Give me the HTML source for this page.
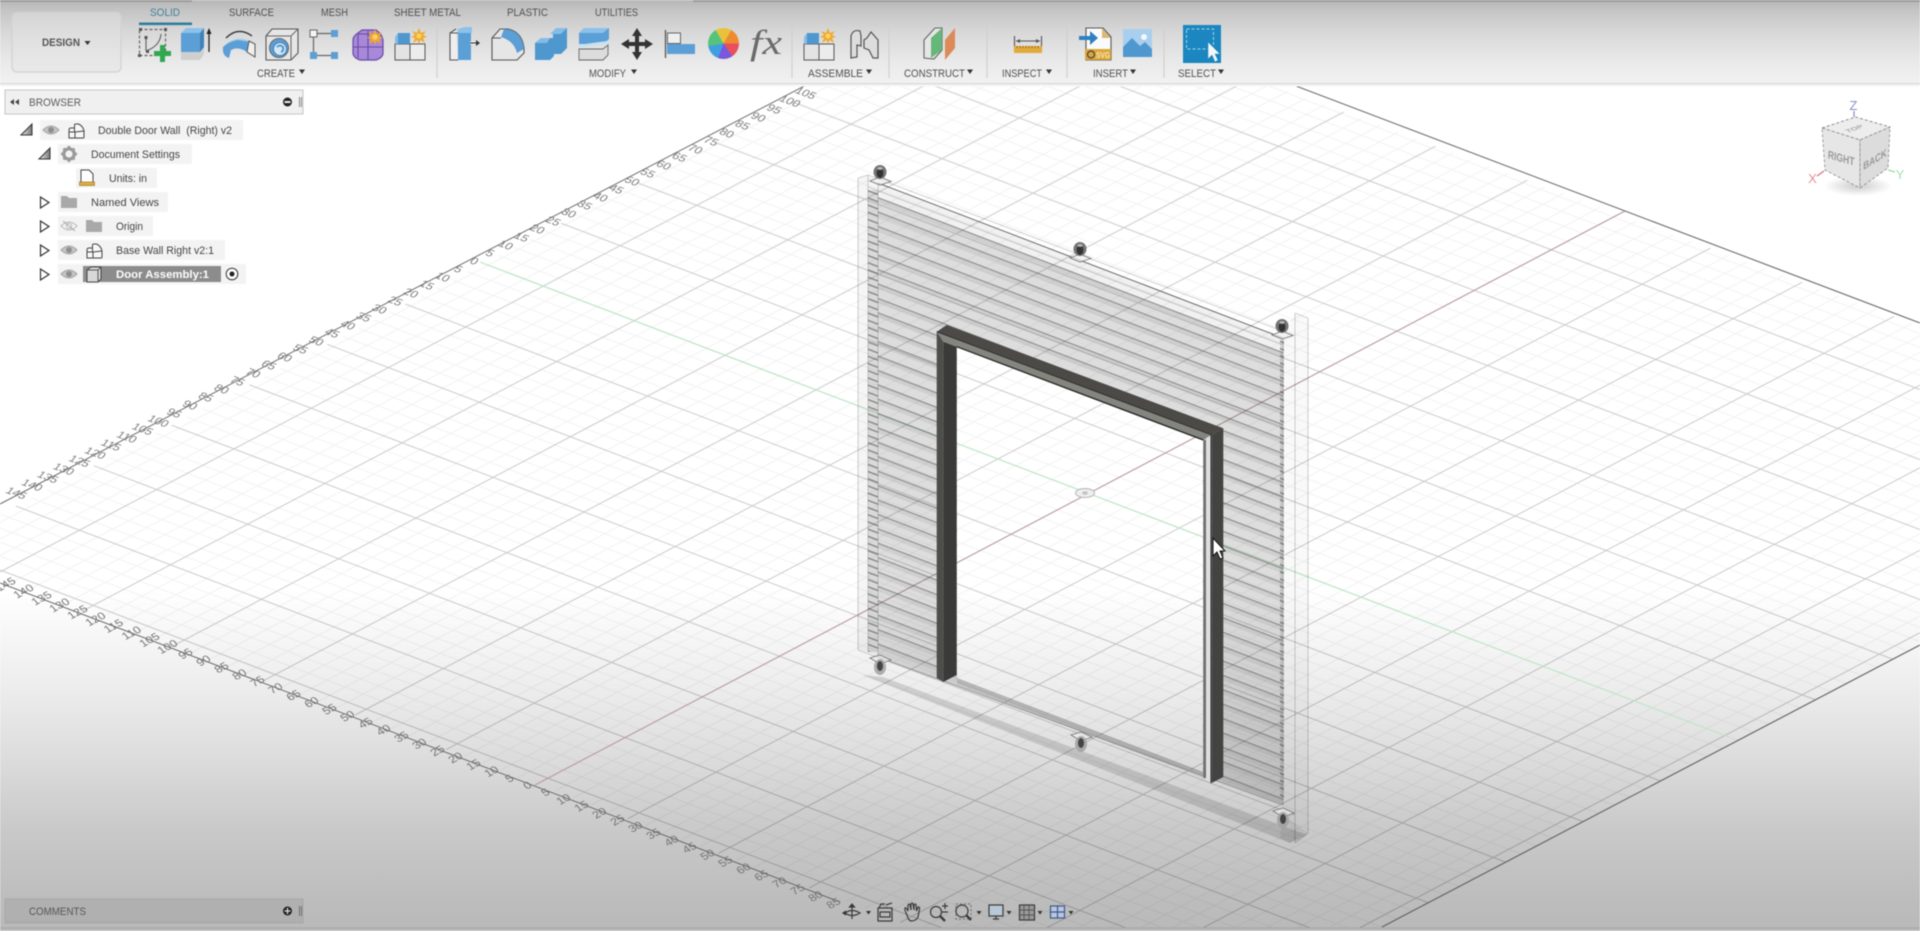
<!DOCTYPE html>
<html><head><meta charset="utf-8"><title>Fusion 360</title>
<style>
html,body{margin:0;padding:0;width:1920px;height:931px;overflow:hidden;background:#fff}
body{position:relative;font-family:"Liberation Sans",sans-serif}
svg{position:absolute;left:0;top:0;display:block;filter:blur(.4px)}
svg text{font-family:"Liberation Sans",sans-serif}
.wheel{position:absolute;left:708px;top:28px;width:31px;height:31px;border-radius:50%;filter:blur(.4px);background:conic-gradient(#e8c23c 0 30deg,#f08a2e 30deg 90deg,#e8505e 90deg 145deg,#7a58dc 145deg 200deg,#3f9fe0 200deg 260deg,#55c47a 260deg 330deg,#e8c23c 330deg 360deg)}
</style></head><body>
<svg width="1920" height="931" viewBox="0 0 1920 931">
<defs>
<linearGradient id="bg" x1="0" y1="0" x2="0" y2="931" gradientUnits="userSpaceOnUse">
<stop offset="0" stop-color="#fff"/><stop offset=".634" stop-color="#fff"/><stop offset=".744" stop-color="#ececec"/><stop offset=".816" stop-color="#dcdcdc"/><stop offset=".888" stop-color="#cacaca"/><stop offset=".959" stop-color="#bebebe"/><stop offset="1" stop-color="#b9b9b9"/>
</linearGradient>
<linearGradient id="tb" x1="0" y1="0" x2="0" y2="84" gradientUnits="userSpaceOnUse">
<stop offset="0" stop-color="#b7b7b7"/><stop offset=".14" stop-color="#c6c6c6"/><stop offset=".38" stop-color="#d8d8d8"/><stop offset=".72" stop-color="#e9e9e9"/><stop offset="1" stop-color="#f2f2f2"/>
</linearGradient>
<linearGradient id="tri" x1="0" y1="0" x2="1" y2="0"><stop offset="0" stop-color="#eee"/><stop offset="1" stop-color="#777"/></linearGradient>
<radialGradient id="sh"><stop offset="0" stop-color="#000" stop-opacity=".2"/><stop offset="1" stop-color="#000" stop-opacity="0"/></radialGradient>
<clipPath id="gc"><path d="M0 514.3 L991 0 H1041.6 L1920 326 V644.6 L1373.6 931 H923 L0 580Z"/></clipPath>
<clipPath id="vp"><rect x="0" y="84" width="1920" height="844"/></clipPath>
<pattern id="mn" width="20" height="20" patternUnits="userSpaceOnUse" patternTransform="matrix(.9096 .3456 .7718 -.4067 1088.2 493.5)">
<path d="M0 0V20M20 0V20M0 0H20M0 20H20" stroke="#000" stroke-opacity=".05" stroke-width="1.3" fill="none"/>
</pattern>
<pattern id="sl" width="20" height="14.4" patternUnits="userSpaceOnUse" patternTransform="matrix(1 .383 0 1 878 197)">
<rect width="20" height="14.4" fill="#777" fill-opacity=".16"/>
<rect width="20" height="4.5" y="1" fill="#666" fill-opacity=".12"/>
<rect width="20" height="1.2" y="0" fill="#555" fill-opacity=".58"/>
</pattern>
<pattern id="tk" width="10" height="7.2" patternUnits="userSpaceOnUse" patternTransform="matrix(1 .383 0 1 868 190)">
<rect width="10" height="7.2" fill="#888" fill-opacity=".26"/>
<rect width="10" height="1.5" fill="#444" fill-opacity=".55"/>
</pattern>
<g id="wt"><path d="M-10 9 L0 5 L11 9.5 L0 13Z" fill="#ededed" fill-opacity=".7" stroke="#777" stroke-width=".9"/><ellipse cx="0" cy="0" rx="6.5" ry="7" fill="#757575"/><ellipse cx="0" cy="1" rx="3.4" ry="5" fill="#333"/><ellipse cx="0" cy="-3.5" rx="2.6" ry="1.4" fill="#bbb"/></g>
<g id="wb"><path d="M-10 -9 L0 -12 L11 -7 L0 -3Z" fill="#ededed" fill-opacity=".7" stroke="#777" stroke-width=".9"/><ellipse cx="0" cy="0" rx="6" ry="8" fill="#a0a0a0" fill-opacity=".85"/><ellipse cx="0" cy="-1" rx="3" ry="5" fill="#444"/></g>
<g id="eye"><path d="M-8 0 Q0 -8 8 0 Q0 8 -8 0Z" fill="#c4c4c4" stroke="#a5a5a5"/><circle r="3" fill="#8f8f8f"/></g>
<g id="comp"><path d="M1 15 V7 Q1 5 3 5 H6.5 V2 Q6.5 1 8 1 H10.5 Q15 3 16 8 V14 Q16 15 15 15 H2 Q1 15 1 15Z M1 9 H7 V15 M7 9 L16 8 M6.5 5 V9" fill="#f7f7f7" stroke="#444" stroke-width="1"/></g>
<path id="fold" d="M0 0 H6 L8 2 H16 V12 H0Z" fill="#a9a9a9"/>
<g id="star"><path d="M0 -8 L2 -3 L7 -5 L4 -1 L8 1 L4 2 L6 7 L1.5 4 L0 8 L-1.5 4 L-6 7 L-4 2 L-8 1 L-4 -1 L-7 -5 L-2 -3Z" fill="#f1a92b"/><circle r="2.5" fill="#fbd56a"/></g>
<g id="nc"><path d="M0 14 H15 V30 H0Z" fill="#e3e3e3" stroke="#555"/><path d="M15 14 H30 V30 H15Z" fill="#ececec" stroke="#555"/><path d="M3 3 H15 V14 H3Z" fill="#4f97cf"/><path d="M0 7 L3 3 V14 H0Z" fill="#85bce6"/></g>
</defs>

<rect width="1920" height="931" fill="url(#bg)"/>

<!-- grid -->
<g clip-path="url(#vp)">
<g clip-path="url(#gc)">
<rect x="0" y="0" width="1920" height="931" fill="url(#mn)"/>
<path d="M0 570L947.4 930M0 500L1131.4 930M0 430L1315.4 930M0 360L1500 930M0 290L1684.2 930M0 220L1868.4 930M0 150L1920 879.6M0 10L1920 739.6M158 1L1920 669.6M342 1L1920 599.6M526 1L1920 529.6M710.5 1L1920 459.6M894.7 1L1920 389.6M0 489.5L928.8 1M0 572L1085.4 1M0 654.5L1241.9 1M0 737L1398.5 1M0 819.5L1555 1M0 902L1711.6 1M103.4 930L1868 1M416.5 930L1920 137.7M572.9 930L1920 220.2M729.4 930L1920 302.7M885.9 930L1920 385.2M1042.6 930L1920 467.7M1198.9 930L1920 550.2M1355.6 930L1920 632.7" fill="none" stroke="#000" stroke-opacity=".16" stroke-width="1"/>
</g>
<path d="M535 785 L1625 211" stroke="#b99aa0" stroke-width="1.1" fill="none"/>
<path d="M480 262 L1729 737" stroke="#bfe6c6" stroke-width="1.2" fill="none"/>
<!-- edges -->
<path d="M0 504 L812 82" stroke="#707070" stroke-width="1" fill="none"/>
<path d="M0 583 L840 902" stroke="#6a6a6a" stroke-width="1" fill="none"/>
<path d="M1296 86 L1920 323" stroke="#6f6f6f" stroke-width="1.1" fill="none"/>
<path d="M1382 927 L1920 645" stroke="#5f5f5f" stroke-width="1.1" fill="none"/>

<!-- ruler labels A -->
<g font-size="12" fill="#7c7c7c" text-anchor="middle" dominant-baseline="central">
<text transform="matrix(.935 .355 -.6 .7 805.3 93.7)">105</text><text transform="matrix(.935 .355 -.6 .7 789.5 101.7)">100</text><text transform="matrix(.935 .355 -.6 .7 773.7 109.7)">95</text><text transform="matrix(.935 .355 -.6 .7 757.9 117.7)">90</text><text transform="matrix(.935 .355 -.6 .7 742.1 125.7)">85</text><text transform="matrix(.935 .355 -.6 .7 726.3 133.7)">80</text><text transform="matrix(.935 .355 -.6 .7 710.6 141.7)">75</text><text transform="matrix(.935 .355 -.6 .7 694.8 149.7)">70</text><text transform="matrix(.935 .355 -.6 .7 679 157.7)">65</text><text transform="matrix(.935 .355 -.6 .7 663.2 165.7)">60</text><text transform="matrix(.935 .355 -.6 .7 647.4 173.7)">55</text><text transform="matrix(.935 .355 -.6 .7 631.6 181.7)">50</text><text transform="matrix(.935 .355 -.6 .7 615.8 189.7)">45</text><text transform="matrix(.935 .355 -.6 .7 600 197.7)">40</text><text transform="matrix(.935 .355 -.6 .7 584.2 205.7)">35</text><text transform="matrix(.935 .355 -.6 .7 568.4 213.7)">30</text><text transform="matrix(.935 .355 -.6 .7 552.7 221.7)">25</text><text transform="matrix(.935 .355 -.6 .7 536.9 229.7)">20</text><text transform="matrix(.935 .355 -.6 .7 521.1 237.7)">15</text><text transform="matrix(.935 .355 -.6 .7 505.3 245.7)">10</text><text transform="matrix(.935 .355 -.6 .7 489.5 253.7)">5</text><text transform="matrix(.935 .355 -.6 .7 473.7 261.7)">0</text>
<text transform="matrix(.935 .355 -.6 .7 457.9 269.7)">5</text><text transform="matrix(.935 .355 -.6 .7 442.1 277.7)">10</text><text transform="matrix(.935 .355 -.6 .7 426.3 285.7)">15</text><text transform="matrix(.935 .355 -.6 .7 410.5 293.7)">20</text><text transform="matrix(.935 .355 -.6 .7 394.8 301.7)">25</text><text transform="matrix(.935 .355 -.6 .7 379 309.7)">30</text><text transform="matrix(.935 .355 -.6 .7 363.2 317.7)">35</text><text transform="matrix(.935 .355 -.6 .7 347.4 325.7)">40</text><text transform="matrix(.935 .355 -.6 .7 331.6 333.7)">45</text><text transform="matrix(.935 .355 -.6 .7 315.8 341.7)">50</text><text transform="matrix(.935 .355 -.6 .7 300 349.7)">55</text><text transform="matrix(.935 .355 -.6 .7 284.2 357.7)">60</text><text transform="matrix(.935 .355 -.6 .7 268.4 365.7)">65</text><text transform="matrix(.935 .355 -.6 .7 252.6 373.7)">70</text><text transform="matrix(.935 .355 -.6 .7 236.9 381.7)">75</text><text transform="matrix(.935 .355 -.6 .7 221.1 389.7)">80</text><text transform="matrix(.935 .355 -.6 .7 205.3 397.7)">85</text><text transform="matrix(.935 .355 -.6 .7 189.5 405.7)">90</text><text transform="matrix(.935 .355 -.6 .7 173.7 413.7)">95</text><text transform="matrix(.935 .355 -.6 .7 157.9 421.7)">100</text><text transform="matrix(.935 .355 -.6 .7 142.1 429.7)">105</text><text transform="matrix(.935 .355 -.6 .7 126.3 437.7)">110</text><text transform="matrix(.935 .355 -.6 .7 110.5 445.7)">115</text><text transform="matrix(.935 .355 -.6 .7 94.7 453.7)">120</text><text transform="matrix(.935 .355 -.6 .7 79 461.7)">125</text><text transform="matrix(.935 .355 -.6 .7 63.2 469.7)">130</text><text transform="matrix(.935 .355 -.6 .7 47.4 477.7)">135</text><text transform="matrix(.935 .355 -.6 .7 31.6 485.7)">140</text><text transform="matrix(.935 .355 -.6 .7 15.8 493.7)">145</text>
</g>
<!-- ruler labels B -->
<g font-size="12" fill="#747474" text-anchor="middle" dominant-baseline="central">
<text transform="matrix(.885 -.466 .6 .7 528 786)">0</text><text transform="matrix(.885 -.466 .6 .7 546 792.9)">5</text><text transform="matrix(.885 -.466 .6 .7 564 799.9)">10</text><text transform="matrix(.885 -.466 .6 .7 582 806.8)">15</text><text transform="matrix(.885 -.466 .6 .7 600 813.7)">20</text><text transform="matrix(.885 -.466 .6 .7 618 820.7)">25</text><text transform="matrix(.885 -.466 .6 .7 636 827.6)">30</text><text transform="matrix(.885 -.466 .6 .7 654 834.5)">35</text><text transform="matrix(.885 -.466 .6 .7 672 841.4)">40</text><text transform="matrix(.885 -.466 .6 .7 690 848.4)">45</text><text transform="matrix(.885 -.466 .6 .7 708 855.3)">50</text><text transform="matrix(.885 -.466 .6 .7 726 862.2)">55</text><text transform="matrix(.885 -.466 .6 .7 744 869.2)">60</text><text transform="matrix(.885 -.466 .6 .7 762 876.1)">65</text><text transform="matrix(.885 -.466 .6 .7 780 883)">70</text><text transform="matrix(.885 -.466 .6 .7 798 890)">75</text><text transform="matrix(.885 -.466 .6 .7 816 896.9)">80</text><text transform="matrix(.885 -.466 .6 .7 834 903.8)">85</text>
<text transform="matrix(.885 -.466 .6 .7 510 779.1)">5</text><text transform="matrix(.885 -.466 .6 .7 492 772.1)">10</text><text transform="matrix(.885 -.466 .6 .7 474 765.2)">15</text><text transform="matrix(.885 -.466 .6 .7 456 758.3)">20</text><text transform="matrix(.885 -.466 .6 .7 438 751.4)">25</text><text transform="matrix(.885 -.466 .6 .7 420 744.4)">30</text><text transform="matrix(.885 -.466 .6 .7 402 737.5)">35</text><text transform="matrix(.885 -.466 .6 .7 384 730.6)">40</text><text transform="matrix(.885 -.466 .6 .7 366 723.6)">45</text><text transform="matrix(.885 -.466 .6 .7 348 716.7)">50</text><text transform="matrix(.885 -.466 .6 .7 330 709.8)">55</text><text transform="matrix(.885 -.466 .6 .7 312 702.8)">60</text><text transform="matrix(.885 -.466 .6 .7 294 695.9)">65</text><text transform="matrix(.885 -.466 .6 .7 276 689)">70</text><text transform="matrix(.885 -.466 .6 .7 258 682)">75</text><text transform="matrix(.885 -.466 .6 .7 240 675.1)">80</text><text transform="matrix(.885 -.466 .6 .7 222 668.2)">85</text><text transform="matrix(.885 -.466 .6 .7 204 661.3)">90</text><text transform="matrix(.885 -.466 .6 .7 186 654.3)">95</text><text transform="matrix(.885 -.466 .6 .7 168 647.4)">100</text><text transform="matrix(.885 -.466 .6 .7 150 640.5)">105</text><text transform="matrix(.885 -.466 .6 .7 132 633.5)">110</text><text transform="matrix(.885 -.466 .6 .7 114 626.6)">115</text><text transform="matrix(.885 -.466 .6 .7 96 619.7)">120</text><text transform="matrix(.885 -.466 .6 .7 78 612.7)">125</text><text transform="matrix(.885 -.466 .6 .7 60 605.8)">130</text><text transform="matrix(.885 -.466 .6 .7 42 598.9)">135</text><text transform="matrix(.885 -.466 .6 .7 24 591.9)">140</text><text transform="matrix(.885 -.466 .6 .7 6 585)">145</text>
</g>

<!-- origin ring -->
<ellipse cx="1085" cy="493" rx="9.5" ry="4.5" fill="#efefef" stroke="#b5b5b5"/><ellipse cx="1085" cy="493" rx="3" ry="1.8" fill="#c4c4c4"/>

<!-- floor shadow -->
<path d="M862 675 L883 677 L1307 835 L1290 843Z" fill="#000" fill-opacity=".13"/>
<path d="M1283 815 L1308 833 L1290 843 L1280 838Z" fill="#000" fill-opacity=".06"/>

<!-- outer translucent blocks -->
<path d="M858 178 L868 175 L878 183 V657 L868 652 L858 650Z" fill="#000" fill-opacity=".04"/>
<path d="M1283 338 L1295 313 L1308 318 V833 L1295 843 L1283 805Z" fill="#000" fill-opacity=".025"/>
<path d="M858 178 V650 M868 175 V652 M878 183 V657 M858 178 L868 175 L1285 332 M868 187 L1283 345 M1283 338 V805 M1295 313 V843 M1308 318 V833 M1295 313 L1308 318 M1295 843 L1308 833 M858 650 L1295 815" fill="none" stroke="#000" stroke-opacity=".2" stroke-width=".9"/>

<!-- wall -->
<path fill-rule="evenodd" d="M878 183 L1283 338 V805 L878 657Z M957 347 L1203 440 V772 L957 678Z" fill="#000" fill-opacity=".055"/>
<path fill-rule="evenodd" d="M878 197 L1283 352 V805 L878 657Z M957 347 L1203 440 V772 L957 678Z" fill="url(#sl)"/>
<rect x="868" y="190" width="10" height="462" fill="url(#tk)"/>
<rect x="1280" y="340" width="4" height="460" fill="url(#tk)"/>
<path d="M878 183 L1283 338" stroke="#666" stroke-width="1" fill="none"/>
<path d="M878 657 L1283 805" stroke="#999" stroke-width="1" fill="none"/>
<path d="M957 678 L1203 772 V778 L957 684Z" fill="#000" fill-opacity=".09"/>
<path d="M957 681 L1203 775" stroke="#aaa" stroke-width="1"/>

<!-- frame -->
<path d="M946.7 325 L1223.3 428.3 L1211.7 435 L936.7 331.7Z" fill="#4c4a47"/>
<path d="M936.7 331.7 L1211.7 435 L1203.3 440 L956.7 346.7 L943.3 341.7Z" fill="#85857f"/>
<path d="M956.7 346.7 L1203.3 440" stroke="#222" stroke-width="1.3"/>
<path d="M936.7 331.7 L943.3 341.7 V682 L936.7 678Z" fill="#4d4d4b"/>
<path d="M943.3 341.7 L956.7 346.7 V675 L943.3 682Z" fill="#3a3a38"/>
<path d="M936.7 331.7 L1211.7 435" stroke="#2b2b2a" stroke-width=".9"/>
<path d="M1203.3 440 H1206 V778 H1203.3Z" fill="#707070"/>
<path d="M1206 438 L1211.7 435 V783 L1206 779Z" fill="#dedede"/>
<path d="M1211.7 435 L1223.3 428.3 V777 L1211.7 783Z" fill="#434341"/>
<path d="M1211 435 V783" stroke="#222" stroke-width="1"/>

<!-- wheels -->
<use href="#wt" x="880" y="172"/><use href="#wt" x="1080" y="249"/><use href="#wt" x="1282" y="326"/>
<use href="#wb" x="880" y="667"/><use href="#wb" x="1081" y="744"/><use href="#wb" x="1283" y="820"/>

<!-- cursor -->
<path d="M1213 538 V556 L1217 552 L1220 559 L1223 558 L1220 551 L1225 551Z" fill="#fff" stroke="#111" stroke-width="1"/>
</g>

<!-- view cube -->
<g>
<ellipse cx="1858" cy="186" rx="34" ry="10" fill="url(#sh)"/>
<path d="M1822 128 L1855.5 117 L1890 127 L1860 140Z" fill="#ededed" stroke="#777" stroke-width=".8" stroke-dasharray="3 2"/>
<path d="M1822 128 L1860 140 V188 L1825 170Z" fill="#e6e6e6" stroke="#888" stroke-width=".8" stroke-dasharray="3 2"/>
<path d="M1860 140 L1890 127 L1888 168 L1860 188Z" fill="#dcdcdc" stroke="#888" stroke-width=".8" stroke-dasharray="3 2"/>
<text transform="matrix(.9 .25 -.05 1.2 1841 162)" font-size="9.5" font-weight="bold" fill="#999" text-anchor="middle">RIGHT</text>
<text transform="matrix(.9 -.55 0 1.2 1875 163)" font-size="9" font-weight="bold" fill="#999" text-anchor="middle">BACK</text>
<text transform="matrix(1 -.35 .6 .5 1856 130)" font-size="8" font-weight="bold" fill="#aaa" text-anchor="middle">TOP</text>
<text x="1853.5" y="110" font-size="13" fill="#8d8dc8" text-anchor="middle">Z</text>
<path d="M1854 111 V117" stroke="#8d8dc8" stroke-width="1.3"/>
<text x="1812.5" y="183" font-size="13" fill="#e08f9b" text-anchor="middle">X</text>
<path d="M1817 176 L1824 171" stroke="#d8707d" stroke-width="1.3"/>
<text x="1900" y="179" font-size="13" fill="#a6e0ae" text-anchor="middle">Y</text>
<path d="M1888 170 L1895 172" stroke="#9cdba5" stroke-width="1.3"/>
</g>

<!-- toolbar -->
<rect width="1920" height="84" fill="url(#tb)"/>
<rect width="192" height="2" fill="#999"/><rect x="693" width="1227" height="2" fill="#999"/>
<rect y="83" width="1920" height="1.5" fill="#dcdcdc"/>
<rect y="84.5" width="1920" height="2" fill="#f6f6f6"/>

<rect x="12" y="12.5" width="109" height="59.5" rx="5" fill="#e4e4e4" fill-opacity=".45" stroke="#d2d2d2" stroke-width="1.3"/>
<text x="42" y="46" font-size="11" font-weight="bold" fill="#555" textLength="38" lengthAdjust="spacingAndGlyphs">DESIGN</text>
<path d="M84.5 41 H90.5 L87.5 45Z" fill="#333"/>

<g font-size="11" fill="#505050">
<text x="150" y="16" fill="#3f8099" textLength="30" lengthAdjust="spacingAndGlyphs">SOLID</text>
<text x="229" y="16" textLength="45" lengthAdjust="spacingAndGlyphs">SURFACE</text>
<text x="321" y="16" textLength="27" lengthAdjust="spacingAndGlyphs">MESH</text>
<text x="394" y="16" textLength="67" lengthAdjust="spacingAndGlyphs">SHEET METAL</text>
<text x="507" y="16" textLength="41" lengthAdjust="spacingAndGlyphs">PLASTIC</text>
<text x="595" y="16" textLength="43" lengthAdjust="spacingAndGlyphs">UTILITIES</text>
<text x="257" y="77" textLength="38" lengthAdjust="spacingAndGlyphs">CREATE</text>
<text x="589" y="77" textLength="37" lengthAdjust="spacingAndGlyphs">MODIFY</text>
<text x="808" y="77" textLength="55" lengthAdjust="spacingAndGlyphs">ASSEMBLE</text>
<text x="904" y="77" textLength="61" lengthAdjust="spacingAndGlyphs">CONSTRUCT</text>
<text x="1002" y="77" textLength="40" lengthAdjust="spacingAndGlyphs">INSPECT</text>
<text x="1093" y="77" textLength="35" lengthAdjust="spacingAndGlyphs">INSERT</text>
<text x="1178" y="77" textLength="38" lengthAdjust="spacingAndGlyphs">SELECT</text>
</g>
<rect x="139" y="22.5" width="53" height="2.6" fill="#2f7d9c"/>
<path d="M299 69.5 H305 L302 74Z M631 69.5 H637 L634 74Z M866 69.5 H872 L869 74Z M967 69.5 H973 L970 74Z M1046 69.5 H1052 L1049 74Z M1130 69.5 H1136 L1133 74Z M1218 69.5 H1224 L1221 74Z" fill="#333"/>
<path d="M437 27 V78 M792 27 V78 M889 27 V78 M987 27 V78 M1067 27 V78 M1164 27 V78" stroke="#d0d0d0" stroke-width="1.2"/>

<!-- icon: sketch -->
<rect x="139.5" y="29.5" width="26" height="26" fill="none" stroke="#666" stroke-width="1.2" stroke-dasharray="3 2"/>
<path d="M139 28 h3 v3 h-3z M164 28 h3 v3 h-3z M138 54 h3 v3 h-3z" fill="#555"/>
<path d="M146 51 V37 M146 51 Q160 46 161 34" fill="none" stroke="#666" stroke-width="1.2"/>
<path d="M146 50 h3 v3 h-3z M144.5 36 h3 v3 h-3z" fill="#555"/>
<path d="M160 45 h5 v6 h6 v5 h-6 v6 h-5 v-6 h-6 v-5 h6z" fill="#2fa84f"/>
<!-- extrude -->
<path d="M181 52 H200 L204 47 V54 L200 60 H181Z" fill="#cfcfcf"/>
<path d="M181 33 H200 V52 H181Z" fill="#5b9fd6"/>
<path d="M181 33 L186 28 H204 L200 33Z" fill="#8cc1ea"/>
<path d="M200 33 L204 28 V47 L200 52Z" fill="#3f82ba"/>
<path d="M209 52 V31" stroke="#222" stroke-width="1.3"/><path d="M206.5 34 L209 28 L211.5 34Z" fill="#222"/>
<!-- revolve -->
<path d="M223 47 Q237 33 253 43 L255 57 L247 52 Q238 46 231 50 L229 58 Q222 56 223 47Z" fill="#5b9fd6"/>
<path d="M223 47 Q237 33 253 43 Q246 41 238 40 Q230 41 223 47Z" fill="#a3cfee"/>
<path d="M249 41 L255 44 L255 57 L247 52Z" fill="#f0f0f0" stroke="#555"/>
<path d="M226 38 Q238 26 252 36" fill="none" stroke="#333" stroke-width="1.3"/>
<!-- hole -->
<path d="M266 36 L272 29 H298 V53 L291 60 H266Z" fill="#e6e6e6" stroke="#555" stroke-width="1.1"/>
<path d="M266 36 H291 L298 29 M291 36 V60" fill="none" stroke="#666"/>
<circle cx="279" cy="48" r="9.5" fill="#5b9fd6" stroke="#666"/><circle cx="280" cy="49" r="6.5" fill="#d6e6f2" stroke="#3f82ba"/>
<path d="M277 47 Q280 44 283 47 Q284 51 281 52" fill="none" stroke="#4f97cf" stroke-width="2"/>
<!-- points -->
<path d="M317 33.5 H331 M313.5 37 V52 M317 55.5 H331" stroke="#666" stroke-width="1.2"/>
<rect x="310" y="30" width="7" height="7" fill="#f4f4f4" stroke="#666"/>
<rect x="331" y="30" width="7" height="7" fill="#5b9fd6"/><rect x="310" y="52" width="7" height="7" fill="#5b9fd6"/><rect x="331" y="52" width="7" height="7" fill="#5b9fd6"/>
<!-- form -->
<path d="M358 33 L362 30 H376 Q382 34 383 40 V54 Q382 58 376 60 H360 Q354 58 353 54 V40 Q353 36 358 33Z" fill="#a888d8" stroke="#6b4aa8" stroke-width="1.2"/>
<path d="M353 47 H383 M368 31 V60 M358 34 H378 M358 34 V58" fill="none" stroke="#6b4aa8" stroke-width="1.1"/>
<use href="#star" x="375" y="37"/>
<!-- new comp -->
<use href="#nc" x="395" y="30"/><use href="#star" x="419" y="36"/>
<!-- press pull -->
<path d="M456 29 L450 33 V60 H458 M450 33 H458" fill="#eee" stroke="#555" stroke-width="1.1"/>
<path d="M458 29 H471 L471 60 H458Z" fill="#5b9fd6"/><path d="M458 29 L465 27 H472 V33 H458Z" fill="#8cc1ea"/>
<path d="M470 43 H478" stroke="#fff" stroke-width="3"/><path d="M470 43 H478" stroke="#333" stroke-width="1.2"/><path d="M476 40 L480 43 L476 46Z" fill="#333"/>
<!-- fillet -->
<path d="M492 60 V38 L500 29 H508 Q522 32 524 48 V53 L517 60Z" fill="#e6e6e6" stroke="#555" stroke-width="1.1"/>
<path d="M504 29 Q522 30 524 49 L517 53 Q514 41 501 37Z" fill="#5b9fd6"/>
<path d="M492 38 H501" stroke="#555"/>
<!-- combine -->
<path d="M535 43 L541 38 H553 V34 L559 28 H567 V48 L561 54 H554 V56 L550 60 H535Z" fill="#4f97cf"/>
<path d="M550 34 L556 28 H567 L561 34Z M535 43 L541 38 H550 L547 43Z" fill="#85bce6"/>
<!-- offset -->
<path d="M579 33 L584 28 H609 V39 L603 44 H579Z" fill="#5b9fd6"/><path d="M579 33 L584 28 H609 L603 33Z" fill="#8cc1ea"/>
<path d="M579 46 L609 42" stroke="#bfe3f6" stroke-width="2.4"/>
<path d="M579 49 H603 L608 45 V55 L603 60 H579Z" fill="#dcdcdc" stroke="#666" stroke-width=".9"/>
<!-- move -->
<path d="M637 28 L642 36 H639 V42 H645 V39 L653 44 L645 49 V46 H639 V52 H642 L637 60 L632 52 H635 V46 H629 V49 L621 44 L629 39 V42 H635 V36 H632Z" fill="#333"/>
<!-- align -->
<path d="M665.5 30 V58" stroke="#555" stroke-width="1.3"/><rect x="667.5" y="33" width="13" height="10.5" fill="#efefef" stroke="#666"/><rect x="667" y="44" width="28" height="10" fill="#5b9fd6"/>
<!-- fx -->
<text x="750" y="54" font-size="35" font-style="italic" fill="#6a6a6a" textLength="32" lengthAdjust="spacingAndGlyphs" style="font-family:'Liberation Serif',serif">fx</text>
<!-- assemble -->
<use href="#nc" x="804" y="30"/><use href="#star" x="828" y="36"/>
<!-- joint -->
<path d="M851 58 V36 Q853 29 860 31 L861 36 V46 L857 45 V57Z" fill="#ddd" stroke="#555" stroke-width="1.2"/>
<path d="M878 58 V40 L871 32 L867 38 L864 40 V48 L869 50 L873 58Z" fill="#ddd" stroke="#555" stroke-width="1.2"/>
<!-- construct -->
<path d="M924 58 V40 L935 28 H942 V50 L934 59Z" fill="#e6e6e6" stroke="#666" stroke-width="1.1"/>
<path d="M931 58 V38 L942 28 V50Z" fill="#66b77a"/>
<path d="M945 60 V40 L955 28 V48Z" fill="#dc8a57"/>
<!-- inspect -->
<path d="M1014.5 36 V50 M1041.5 36 V50 M1016 41 H1040" stroke="#555" stroke-width="1.1"/>
<path d="M1016 41 L1020 39 V43Z M1040 41 L1036 39 V43Z" fill="#555"/>
<rect x="1014" y="46" width="28" height="7" fill="#e2a93b"/>
<path d="M1017 46v2M1020 46v2M1023 46v2M1026 46v2M1029 46v2M1032 46v2M1035 46v2M1038 46v2" stroke="#8d6a20"/>
<!-- insert -->
<path d="M1086 28 H1103 L1111 37 V60 H1086Z" fill="#fafafa" stroke="#555" stroke-width="1.1"/>
<path d="M1102 28 L1111 38 H1102Z" fill="#d9b978"/>
<path d="M1079 36 H1090 V31 L1098 38 L1090 45 V40 H1079Z" fill="#2f7fc1"/>
<rect x="1085" y="49" width="26" height="11" fill="#dca63b"/>
<circle cx="1091" cy="54.5" r="3.5" fill="none" stroke="#444" stroke-width="1.2"/>
<text x="1096" y="58" font-size="8.5" font-weight="bold" fill="#f8e9b0" textLength="14" lengthAdjust="spacingAndGlyphs">SVG</text>
<!-- image -->
<rect x="1123" y="29" width="29" height="28" fill="#a9cfee"/>
<path d="M1123 57 V47 L1132 38 L1140 46 L1145 42 L1152 49 V57Z" fill="#4f97cf"/>
<circle cx="1144" cy="37" r="3" fill="#f2f8fc"/>
<!-- select -->
<rect x="1183" y="25" width="38" height="38" fill="#1b86bf"/>
<rect x="1186.5" y="29" width="27" height="20" fill="none" stroke="#a6d7ee" stroke-width="1" stroke-dasharray="3 2"/>
<path d="M1208 42 L1208 59 L1212 55 L1215 62 L1218 60 L1215 54 L1220 54Z" fill="#f4f7f8" stroke="#1b86bf" stroke-width=".5"/>

<!-- browser -->
<rect x="5" y="90" width="298" height="24" fill="#f0f0f0" stroke="#c6c6c6"/>
<path d="M14 99 V105 L10 102Z M19 99 V105 L15 102Z" fill="#444"/>
<text x="29" y="106" font-size="11" fill="#5b5b5b" textLength="52" lengthAdjust="spacingAndGlyphs">BROWSER</text>
<circle cx="287.5" cy="102" r="4.5" fill="#222"/><rect x="284.5" y="101" width="6" height="2" fill="#eee"/>
<path d="M299.5 97 V107 M301.5 97 V107" stroke="#888"/>

<rect x="40" y="120" width="203" height="20" fill="#f3f3f3"/>
<rect x="58" y="144" width="134" height="20" fill="#f3f3f3"/>
<rect x="76" y="168" width="81" height="20" fill="#f3f3f3"/>
<rect x="58" y="192" width="110" height="20" fill="#f3f3f3"/>
<rect x="58" y="216" width="95" height="20" fill="#f3f3f3"/>
<rect x="58" y="240" width="167" height="20" fill="#f3f3f3"/>
<rect x="58" y="264" width="188" height="20" fill="#f3f3f3"/>
<rect x="83" y="266" width="138" height="16" fill="#8c8c8c"/>

<path d="M21 135 L32 124 V135Z" fill="url(#tri)" stroke="#333"/>
<path d="M39 159 L50 148 V159Z" fill="url(#tri)" stroke="#333"/>
<path d="M40.5 197 L49 202.5 L40.5 208Z M40.5 221 L49 226.5 L40.5 232Z M40.5 245 L49 250.5 L40.5 256Z M40.5 269 L49 274.5 L40.5 280Z" fill="#fff" stroke="#333" stroke-width="1.2"/>

<use href="#eye" x="51" y="130"/>
<use href="#comp" x="68" y="123"/>
<g fill="#444" font-size="11">
<text x="98" y="134" textLength="134" lengthAdjust="spacingAndGlyphs" xml:space="preserve">Double Door Wall  (Right) v2</text>
<text x="91" y="158" textLength="89" lengthAdjust="spacingAndGlyphs">Document Settings</text>
<text x="109" y="182" textLength="38" lengthAdjust="spacingAndGlyphs">Units: in</text>
<text x="91" y="206" textLength="68" lengthAdjust="spacingAndGlyphs">Named Views</text>
<text x="116" y="230" textLength="27" lengthAdjust="spacingAndGlyphs">Origin</text>
<text x="116" y="254" textLength="98" lengthAdjust="spacingAndGlyphs">Base Wall Right v2:1</text>
<text x="116" y="278" font-weight="bold" fill="#fff" textLength="93" lengthAdjust="spacingAndGlyphs">Door Assembly:1</text>
</g>
<!-- gear -->
<circle cx="69" cy="154" r="5.2" fill="none" stroke="#999" stroke-width="3.2"/>
<path d="M69 146 V149 M69 159 V162 M61 154 H64 M74 154 H77 M63.5 148.5 L65.5 150.5 M72.5 157.5 L74.5 159.5 M74.5 148.5 L72.5 150.5 M65.5 157.5 L63.5 159.5" stroke="#999" stroke-width="2.6"/>
<!-- units doc -->
<path d="M81 170 H89 L93 174 V183 H81Z" fill="#fff" stroke="#444"/>
<rect x="79.5" y="182" width="15" height="3.5" fill="#e3ac3a" stroke="#8b6a20" stroke-width=".6"/>
<use href="#fold" x="61" y="196"/>
<use href="#fold" x="86" y="220"/>
<!-- eye off -->
<g transform="translate(69 226)"><path d="M-8 0 Q0 -8 8 0 Q0 8 -8 0Z" fill="none" stroke="#bbb"/><circle r="2.6" fill="none" stroke="#bbb"/><path d="M-6 -5 L6 5" stroke="#aaa"/></g>
<use href="#eye" x="69" y="250"/><use href="#comp" x="86" y="243"/>
<use href="#eye" x="69" y="274"/>
<path d="M87 270 L91 267 H101 V279 L98 282 H87Z" fill="#d8d8d8" stroke="#444"/><path d="M87 270 H98 L101 267 M98 270 V282" fill="none" stroke="#555"/>
<circle cx="232" cy="274" r="5.8" fill="#fff" stroke="#333"/><circle cx="232" cy="274" r="2.5" fill="#222"/>

<!-- comments -->
<rect x="5" y="899" width="298" height="24" fill="#000" fill-opacity=".06" stroke="#9d9d9d" stroke-opacity=".6"/>
<text x="29" y="915" font-size="11" fill="#575757" textLength="57" lengthAdjust="spacingAndGlyphs">COMMENTS</text>
<circle cx="287.5" cy="911" r="4.5" fill="#222"/><path d="M284.5 911 H290.5 M287.5 908 V914" stroke="#ddd" stroke-width="1.3"/>
<path d="M299.5 906 V916 M301.5 906 V916" stroke="#6f6f6f"/>
<rect y="927.5" width="1920" height="1.2" fill="#a7a7a7"/>

<!-- nav bar -->
<g fill="none" stroke="#3a3a3a" stroke-width="1.2">
<path d="M845 913 Q852 908 860 913 Q852 918 845 913Z M852 905 V919"/>
<path d="M852 904 L849.5 907 H854.5Z M846 915 L843 913 L846 911" fill="#333"/>
<path d="M878 908 H892 V921 H878Z M880 912 H890 V917 H880Z M879 908 L881 904 H885 M886 905 L892 903"/>
<path d="M907 915 Q904 909 905 908 Q906 907 908 911 V905 Q909.5 903 910 905 L911 910 V904 Q912.5 902 913 904 L914 910 V905 Q915.5 903 916 905 L916.5 911 L918 907 Q920 907 919.5 909 L918 917 Q916 921 911 921 Q908 920 907 915Z"/>
<circle cx="936" cy="912" r="5.5"/><path d="M940 916 L945 921" stroke-width="2.4"/><path d="M942 906 H948 M945 903 V909 M942 912 H948"/>
<rect x="956" y="904" width="15" height="15" stroke-dasharray="2 2" stroke="#777"/><circle cx="962" cy="911" r="6"/><path d="M966 915 L971 920" stroke-width="2.4"/>
<rect x="989" y="905" width="14" height="11" fill="#b9c8d6"/><path d="M993 919 H999 M996 916 V919"/>
<rect x="1019.5" y="905" width="15" height="15" fill="#9a9a9a"/>
<path d="M1024 905 V920 M1029 905 V920 M1019 910 H1035 M1019 915 H1035" stroke="#555" stroke-width=".9"/>
<rect x="1050.5" y="906" width="14" height="12" fill="#b9c8e0" stroke="#3c5a8a"/><path d="M1057.5 906 V918 M1050 912 H1065" stroke="#3c5a8a"/>
</g>
<path d="M866 911 H871 L868.5 914.5Z M976.5 911 H981.5 L979 914.5Z M1006.5 911 H1011.5 L1009 914.5Z M1037.5 911 H1042.5 L1040 914.5Z M1068.5 911 H1073.5 L1071 914.5Z" fill="#333"/>
</svg>
<div class="wheel"></div>
</body></html>
